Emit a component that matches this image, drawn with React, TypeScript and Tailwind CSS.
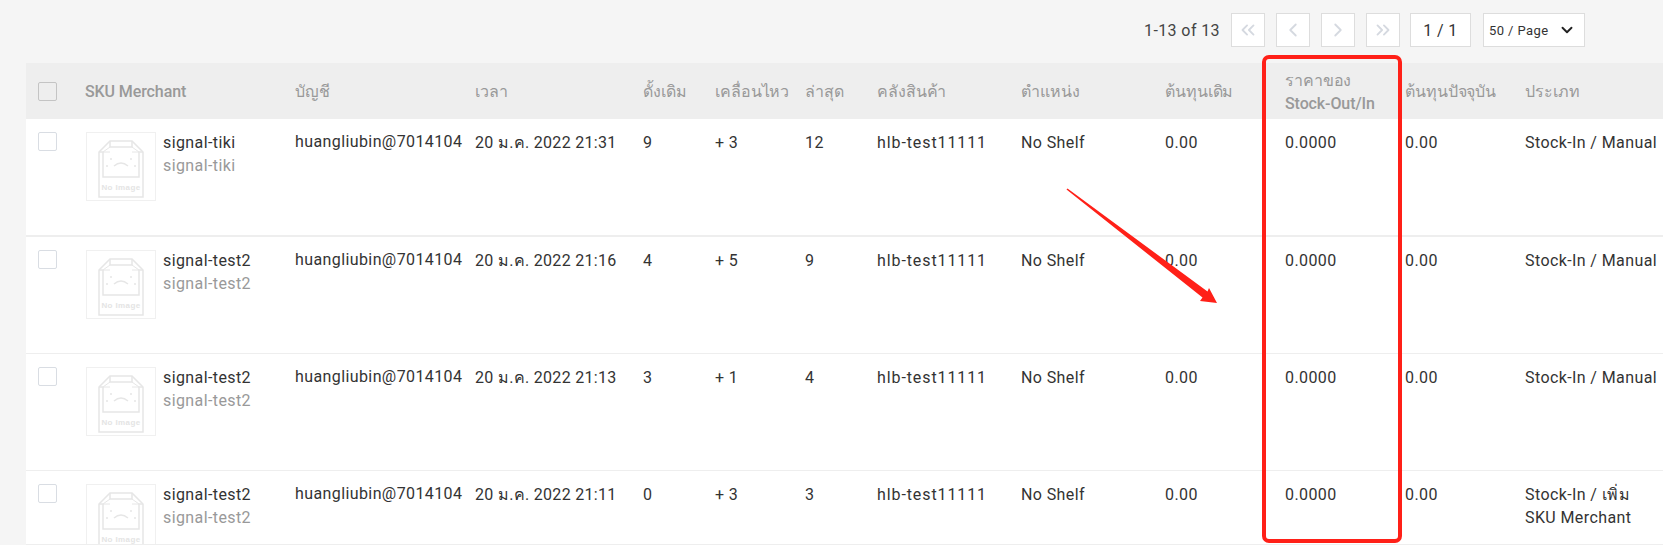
import React from 'react';
import { ChevronsLeft, ChevronLeft, ChevronRight, ChevronsRight, ChevronDown } from 'lucide-react';

const GRID = 'grid grid-cols-[59px_210px_180px_168px_72px_90px_72px_144px_144px_120px_120px_120px_138px]';

const HEADERS = ['SKU Merchant', 'บัญชี', 'เวลา', 'ดั้งเดิม', 'เคลื่อนไหว', 'ล่าสุด', 'คลังสินค้า', 'ตำแหน่ง', 'ต้นทุนเดิม'];

const ROWS = [
  { sku: 'signal-tiki', time: '20 ม.ค. 2022 21:31', from: '9', move: '+ 3', to: '12', type: 'Stock-In / Manual', rowClass: 'h-[118px] border-b-2 border-[#eeeeee]' },
  { sku: 'signal-test2', time: '20 ม.ค. 2022 21:16', from: '4', move: '+ 5', to: '9', type: 'Stock-In / Manual', rowClass: 'h-[117px] border-b border-[#eeeeee]' },
  { sku: 'signal-test2', time: '20 ม.ค. 2022 21:13', from: '3', move: '+ 1', to: '4', type: 'Stock-In / Manual', rowClass: 'h-[117px] border-b border-[#eeeeee]' },
  { sku: 'signal-test2', time: '20 ม.ค. 2022 21:11', from: '0', move: '+ 3', to: '3', type: 'Stock-In / เพิ่ม SKU Merchant', rowClass: 'h-[74px] border-b border-[#eeeeee]' },
];

const NoImage = () => (
  <div className="ml-[1px] w-[70px] h-[69px] shrink-0 border border-[#f0f0f0] bg-white">
    <svg width="68" height="67" viewBox="0 0 68 67" fill="none" stroke="#e6e6e6" strokeWidth="1.5">
      <path d="M12 64 V19 L23 8 H45 L56 19 V64 Z" />
      <path d="M16 19 V44 H52 V19" />
      <path d="M12 19 H16 M52 19 H56" />
      <path d="M23 8 V14 H45 V8" />
      <path d="M23 14 L16 19 M45 14 L52 19 M16 19 H23 M45 19 H52" strokeWidth="1" />
      <path d="M27 33 Q34 27 41 33" />
      <circle cx="24" cy="26" r="1" fill="#e6e6e6" stroke="none" />
      <circle cx="44" cy="26" r="1" fill="#e6e6e6" stroke="none" />
      <circle cx="48" cy="33" r="1" fill="#e6e6e6" stroke="none" />
      <circle cx="20" cy="33" r="1" fill="#e6e6e6" stroke="none" />
      <text x="34" y="57" textAnchor="middle" fontSize="8" fontWeight="700" fill="#e4e4e4" stroke="none" fontFamily="Liberation Sans, sans-serif">No Image</text>
    </svg>
  </div>
);

const PageButton = ({ children }: { children: React.ReactNode }) => (
  <div className="w-[34px] h-[34px] flex items-center justify-center bg-white border border-[#dddddd] text-[#d5d9e0]">
    {children}
  </div>
);

export default function App() {
  return (
    <div className="relative h-screen w-full overflow-hidden bg-[#f5f5f5] font-['Roboto','Noto_Sans',sans-serif] text-[16px] leading-[23px] text-[#333333]">
      <div className="h-[63px] pt-[13px] pr-[78px] flex justify-end items-start gap-[11px]">
        <span className="h-[34px] flex items-center tracking-[0.4px] text-[#444444]">1-13 of 13</span>
        <PageButton><ChevronsLeft size={22} strokeWidth={2} /></PageButton>
        <PageButton><ChevronLeft size={22} strokeWidth={2} /></PageButton>
        <PageButton><ChevronRight size={22} strokeWidth={2} /></PageButton>
        <PageButton><ChevronsRight size={22} strokeWidth={2} /></PageButton>
        <div className="w-[61px] h-[34px] flex items-center justify-center bg-white border border-[#dddddd] -ml-[1px] tracking-[0.4px]">1 / 1</div>
        <div className="w-[102px] h-[34px] flex items-center justify-between pl-[5px] pr-[8px] bg-white border border-[#dddddd] ml-[1px] text-[13px] tracking-[0.4px]">
          50 / Page
          <ChevronDown size={18} strokeWidth={2.5} className="text-[#222222]" />
        </div>
      </div>

      <div className="ml-[26px]">
        <div className={`${GRID} h-14 items-center bg-[#eeeeee] font-medium text-[#999999]`}>
          <div className="pl-3">
            <div className="w-[19px] h-[19px] rounded-[2px] border border-[#c4c4c4]" />
          </div>
          {HEADERS.map((h) => (
            <div key={h} className="tracking-[-0.1px]">{h}</div>
          ))}
          <div className="pt-[2px] tracking-[-0.1px]">
            ราคาของ
            <br />
            Stock-Out/In
          </div>
          <div className="whitespace-nowrap tracking-[-0.1px]">ต้นทุนปัจจุบัน</div>
          <div className="tracking-[-0.1px]">ประเภท</div>
        </div>

        {ROWS.map((row) => (
          <div key={row.time} className={`${GRID} ${row.rowClass} bg-white overflow-hidden tracking-[0.4px]`}>
            <div className="pl-3 pt-[13px]">
              <div className="w-[19px] h-[19px] rounded-[2px] border border-[#d9dde3] bg-white" />
            </div>
            <div className="flex gap-[7px] pt-[13px]">
              <NoImage />
              <div className="-mt-[1px]">
                <div>{row.sku}</div>
                <div className="text-[#999999]">{row.sku}</div>
              </div>
            </div>
            <div className="pt-[11px] whitespace-nowrap">huangliubin@7014104</div>
            <div className="pt-[12px] whitespace-nowrap tracking-[0.3px]">{row.time}</div>
            <div className="pt-[12px]">{row.from}</div>
            <div className="pt-[12px]">{row.move}</div>
            <div className="pt-[12px]">{row.to}</div>
            <div className="pt-[12px] tracking-[0.9px]">hlb-test11111</div>
            <div className="pt-[12px]">No Shelf</div>
            <div className="pt-[12px]">0.00</div>
            <div className="pt-[12px]">0.0000</div>
            <div className="pt-[12px]">0.00</div>
            <div className="pt-[12px]">{row.type}</div>
          </div>
        ))}
      </div>

      {/* red annotation box and arrow drawn over the table */}
      <div className="absolute left-[1262px] top-[55px] w-[140px] h-[488px] rounded-[7px] border-4 border-[#ff2018]" />
      <svg className="absolute left-[1060px] top-[185px]" width="165" height="125" viewBox="0 0 165 125">
        <path d="M7.5 3.5 L147.5 106.5 L149 103 L157 118 L140 116 L142.5 112.5 L6.5 4.5 Z" fill="#ff2018" />
      </svg>
    </div>
  );
}
